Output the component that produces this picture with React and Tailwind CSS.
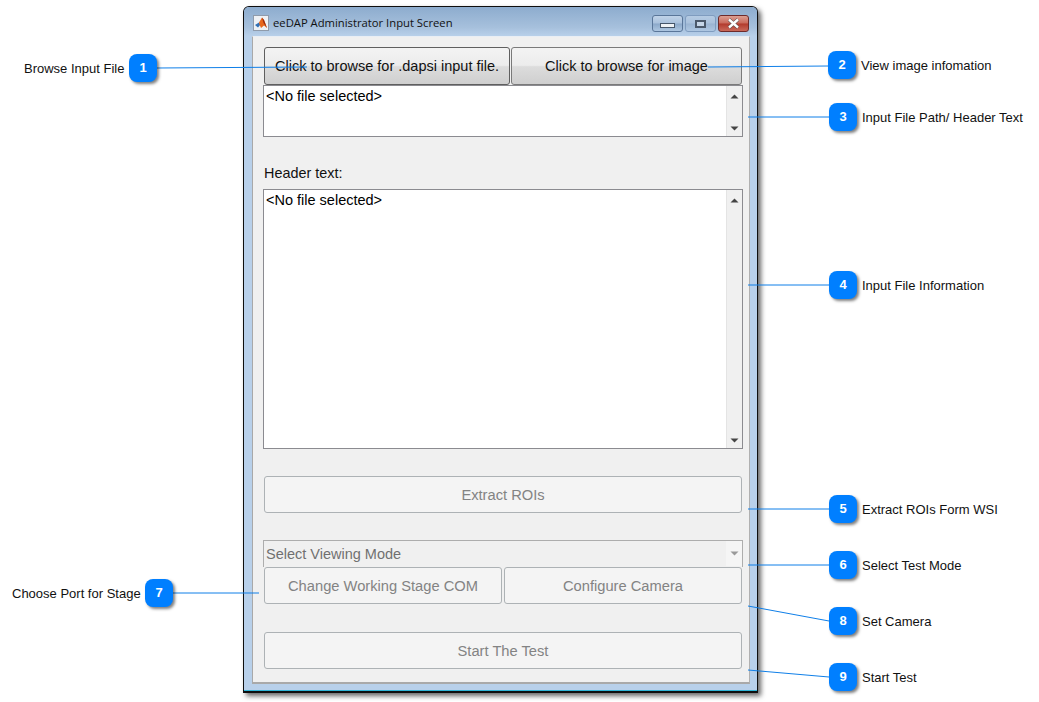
import React from 'react';

const callouts = [
  { n: 1, pos: 'left-[129px] top-[54px]', text: 'Browse Input File', label: 'left-[24px] top-[60px]' },
  { n: 2, pos: 'left-[828px] top-[51px]', text: 'View image infomation', label: 'left-[861px] top-[57px]' },
  { n: 3, pos: 'left-[829px] top-[103px]', text: 'Input File Path/ Header Text', label: 'left-[862px] top-[109px]' },
  { n: 4, pos: 'left-[829px] top-[271px]', text: 'Input File Information', label: 'left-[862px] top-[277px]' },
  { n: 5, pos: 'left-[829px] top-[495px]', text: 'Extract ROIs Form WSI', label: 'left-[862px] top-[501px]' },
  { n: 6, pos: 'left-[829px] top-[551px]', text: 'Select Test Mode', label: 'left-[862px] top-[557px]' },
  { n: 7, pos: 'left-[145px] top-[579px]', text: 'Choose Port for Stage', label: 'left-[12px] top-[585px]' },
  { n: 8, pos: 'left-[829px] top-[607px]', text: 'Set Camera', label: 'left-[862px] top-[613px]' },
  { n: 9, pos: 'left-[829px] top-[663px]', text: 'Start Test', label: 'left-[862px] top-[669px]' },
];

const lines = [
  [157, 68, 307, 67],
  [828, 66, 708, 67],
  [829, 117, 748, 117],
  [829, 285, 748, 285],
  [829, 509, 748, 509],
  [829, 565, 748, 565],
  [145, 593, 259, 593],
  [829, 621, 748, 606],
  [829, 677, 748, 670],
];

const ArrowUp = () => (
  <svg width="9" height="5" viewBox="0 0 9 5"><path d="M4.5 0.5 L8.5 4.5 L0.5 4.5 Z" fill="#444" /></svg>
);

const ArrowDown = ({ color = '#444' }) => (
  <svg width="9" height="5" viewBox="0 0 9 5"><path d="M0.5 0.5 L8.5 0.5 L4.5 4.5 Z" fill={color} /></svg>
);

const TextBox = ({ height }) => (
  <div className={`flex ${height} border border-[#8b8b90] bg-white`}>
    <div className="flex-1 pt-[1px] pl-[2px] text-[14.5px] leading-[18px] text-black">&lt;No file selected&gt;</div>
    <div className="flex w-[16px] flex-col items-center justify-between border-l border-[#e4e4e4] bg-[#f0f0f0] pt-[8px] pb-[5px]">
      <ArrowUp />
      <ArrowDown />
    </div>
  </div>
);

const ActiveButton = ({ className, children }) => (
  <button className={`h-[38px] rounded-[3px] border bg-[linear-gradient(#f3f3f3_0%,#ececec_48%,#dcdcdc_52%,#cfcfcf_100%)] pt-[2px] text-[14.5px] text-[#111] ${className}`}>
    {children}
  </button>
);

const DisabledButton = ({ className, children }) => (
  <button disabled className={`h-[37px] rounded-[3px] border border-[#adb2b5] bg-[#f4f4f4] pt-[2px] text-[14.7px] text-[#838383] ${className}`}>
    {children}
  </button>
);

const MatlabIcon = () => (
  <svg width="16" height="16" viewBox="0 0 16 16">
    <rect x="0.5" y="0.5" width="15" height="15" fill="#eef1f5" stroke="#8f9bab" />
    <path d="M2 10 L6 7.5 L7.5 9.5 L5 12.5 Z" fill="#2f6fb5" />
    <path d="M6 7.5 L9 2.5 L11 5 L14 13 L11 10.5 L8 13 L6.5 9.5 Z" fill="#e8671c" />
    <path d="M9 2.5 L11 5 L14 13 L10.5 8 Z" fill="#9c2b0e" />
  </svg>
);

const WindowControls = () => (
  <div className="flex items-start">
    <div className="flex h-[17px] w-[31px] items-end justify-center rounded-[3px] border border-[#5a7699] bg-[linear-gradient(#c0d3e8_0%,#a9c1dc_48%,#8ba8c9_52%,#adc6e1_100%)] pb-[3px]">
      <div className="h-[5px] w-[15px] border border-[#46566a] bg-[#eef2f6]" />
    </div>
    <div className="ml-[2px] flex h-[17px] w-[31px] items-center justify-center rounded-[3px] border border-[#7f9cbf] bg-[linear-gradient(#b5cbe3_0%,#a9c1dc_48%,#9ab4d2_52%,#aec7e2_100%)]">
      <div className="h-[8px] w-[11px] border-2 border-[#4a586a] bg-[#c6d6e8]" />
    </div>
    <div className="ml-[2px] flex h-[17px] w-[31px] items-center justify-center rounded-[3px] border border-[#6e2b2b] bg-[linear-gradient(#dc9f92_0%,#c9685a_48%,#b23a2c_52%,#c9695a_100%)]">
      <svg width="15" height="11" viewBox="0 0 15 11">
        <path d="M3 1.5 L12 9.5 M12 1.5 L3 9.5" stroke="#4a4a4a" strokeWidth="3.6" />
        <path d="M3 1.5 L12 9.5 M12 1.5 L3 9.5" stroke="#ffffff" strokeWidth="2.4" />
      </svg>
    </div>
  </div>
);

export default function App() {
  return (
    <div className="relative h-[702px] w-[1039px] overflow-hidden bg-white font-['Liberation_Sans',Arial,sans-serif]">
      <div className="pt-[6px] pl-[243px]">
        {/* window */}
        <div className="h-[687px] w-[515px] rounded-t-[6px] border border-b-2 border-[#0e0e0e] bg-[#b8d0ea] shadow-[inset_0_-1px_0_#2fb4d6,3px_3px_5px_rgba(0,0,0,0.6)]">
          <div className="flex h-[29px] items-start rounded-t-[5px] bg-[linear-gradient(#8dacce_0%,#a6c0dc_70%,#b8d0ea_100%)] pt-[8px] pr-[8px] pl-[9px]">
            <MatlabIcon />
            <span className="ml-[4px] flex-1 font-['Open_Sans',sans-serif] text-[11.25px] leading-[16px] text-[#111]">eeDAP Administrator Input Screen</span>
            <WindowControls />
          </div>

          <div className="ml-[8px] flex h-[648px] w-[498px] flex-col border border-b-2 border-[#e9eef4] border-b-[#a9a9a9] border-r-[#b0b0b0] border-l-[#a9a9a9] bg-[#f0f0f0] pt-[10px] pr-[6px] pl-[10px]">
            <div className="flex h-[38px] px-[1px]">
              <ActiveButton className="w-[246px] border-[#5f5f5f]">Click to browse for .dapsi input file.</ActiveButton>
              <ActiveButton className="ml-[1px] w-[231px] border-[#7a7a7a]">Click to browse for image</ActiveButton>
            </div>
            <TextBox height="h-[52px]" />
            <div className="flex h-[52px] items-end pb-[7px] pl-[1px] text-[14.4px] leading-[18px] text-[#111]">Header text:</div>
            <TextBox height="h-[260px]" />

            <div className="mt-[27px] flex px-[1px]">
              <DisabledButton className="flex-1">Extract ROIs</DisabledButton>
            </div>

            <div className="mt-[27px] flex h-[27px] items-start justify-between border-t border-r border-l border-[#adadad] bg-[#f0f0f0] pl-[2px]">
              <span className="pt-[4px] text-[14.5px] leading-[18px] text-[#707070]">Select Viewing Mode</span>
              <div className="flex h-[25px] w-[16px] items-center justify-center bg-[#f5f5f5]">
                <ArrowDown color="#9a9a9a" />
              </div>
            </div>

            <div className="flex justify-between px-[1px]">
              <DisabledButton className="w-[238px]">Change Working Stage COM</DisabledButton>
              <DisabledButton className="w-[238px]">Configure Camera</DisabledButton>
            </div>

            <div className="mt-[28px] flex px-[1px]">
              <DisabledButton className="flex-1">Start The Test</DisabledButton>
            </div>
          </div>
        </div>
      </div>

      {/* leader lines */}
      <svg className="absolute top-0 left-0" width="1039" height="702" viewBox="0 0 1039 702">
        {lines.map(([x1, y1, x2, y2], i) => (
          <line key={i} x1={x1} y1={y1} x2={x2} y2={y2} stroke="#0f7fe8" strokeWidth="1" />
        ))}
      </svg>

      {callouts.map((c) => (
        <React.Fragment key={c.n}>
          <div className={`absolute flex h-[28px] w-[28px] items-center justify-center rounded-[8px] bg-[#007fff] text-[13px] font-bold text-white shadow-[2px_2px_3px_rgba(0,0,0,0.5)] ${c.pos}`}>
            {c.n}
          </div>
          <div className={`absolute pt-[1px] text-[13px] leading-[16px] whitespace-nowrap text-[#111] ${c.label}`}>{c.text}</div>
        </React.Fragment>
      ))}
    </div>
  );
}
